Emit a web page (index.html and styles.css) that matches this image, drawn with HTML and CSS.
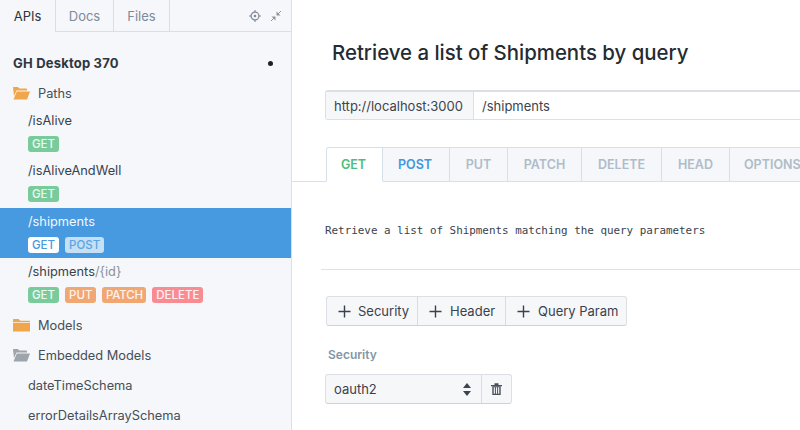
FILE: index.html
```html
<!DOCTYPE html>
<html lang="en">
<head>
<meta charset="utf-8">
<title>Stoplight</title>
<link rel="stylesheet" href="styles.css">
</head>
<body>
<div class="app">
  <aside class="sidebar">
    <div class="side-tabs">
      <div class="side-tab active">APIs</div>
      <div class="side-tab">Docs</div>
      <div class="side-tab">Files</div>
      <div class="side-tools">
        <svg class="tool" width="12" height="12" viewBox="0 0 12 12"><circle cx="6" cy="6" r="3.9" fill="none" stroke="#7f8a96" stroke-width="1.2"/><circle cx="6" cy="6" r="1.3" fill="#7f8a96"/><path d="M6 0v2M6 10v2M0 6h2M10 6h2" stroke="#7f8a96" stroke-width="1.1"/></svg>
        <svg class="tool" width="12" height="12" viewBox="0 0 12 12"><path d="M1 11l3-3M11 1L8 4" stroke="#8c96a1" stroke-width="1"/><path d="M1.500 6.500h4v4zM10.500 5.500h-4v-4z" fill="#8c96a1"/></svg>
      </div>
    </div>
    <div class="tree">
      <div class="project"><span>GH Desktop 370</span><i class="dot"></i></div>
      <div class="folder">
        <svg class="ficon" width="17" height="14" viewBox="0 0 17 14"><path d="M0 1.500Q0 1 .5 1h4.300l1.700 1.600h6.700q.8 0 .8.800V4.500H3.500L1 10z" fill="#f0a64b"/><path d="M3.800 5.500H17L14 13.500H.5z" fill="#f0a64b"/></svg>
        <span>Paths</span>
      </div>
      <div class="path">
        <div class="path-name">/isAlive</div>
        <div class="badges"><span class="badge get">GET</span></div>
      </div>
      <div class="path">
        <div class="path-name">/isAliveAndWell</div>
        <div class="badges"><span class="badge get">GET</span></div>
      </div>
      <div class="path selected">
        <div class="path-name">/shipments</div>
        <div class="badges"><span class="badge sel-get">GET</span><span class="badge sel-post">POST</span></div>
      </div>
      <div class="path">
        <div class="path-name">/shipments<span class="param">/{id}</span></div>
        <div class="badges"><span class="badge get">GET</span><span class="badge put">PUT</span><span class="badge put patch">PATCH</span><span class="badge del">DELETE</span></div>
      </div>
      <div class="folder models">
        <svg class="ficon" width="17" height="14" viewBox="0 0 17 14"><path d="M0 1.500Q0 1 .5 1h5l1.800 1.800H16.500q.5 0 .5.500v1H0z" fill="#f0a64b"/><path d="M0 5h17v8.500H0z" fill="#f0a64b"/></svg>
        <span>Models</span>
      </div>
      <div class="folder">
        <svg class="ficon" width="17" height="14" viewBox="0 0 17 14"><path d="M0 1.500Q0 1 .5 1h4.300l1.700 1.600h6.700q.8 0 .8.800V4.500H3.500L1 10z" fill="#9ea4ab"/><path d="M3.800 5.500H17L14 13.500H.5z" fill="#9ea4ab"/></svg>
        <span>Embedded Models</span>
      </div>
      <div class="schema">dateTimeSchema</div>
      <div class="schema">errorDetailsArraySchema</div>
    </div>
  </aside>
  <main class="main">
    <h1 class="title">Retrieve a list of Shipments by query</h1>
    <div class="url">
      <div class="url-host">http://localhost:3000</div>
      <div class="url-path">/shipments</div>
    </div>
    <div class="methods">
      <div class="lead"></div>
      <div class="method m-get">GET</div>
      <div class="method m-post">POST</div>
      <div class="method">PUT</div>
      <div class="method">PATCH</div>
      <div class="method">DELETE</div>
      <div class="method">HEAD</div>
      <div class="method last">OPTIONS</div>
    </div>
    <p class="desc">Retrieve a list of Shipments matching the query parameters</p>
    <div class="rule"></div>
    <div class="btn-group">
      <div class="btn b-sec"><svg width="13" height="13" viewBox="0 0 13 13"><path d="M6.500.5v12M.5 6.500h12" stroke="#39424c" stroke-width="1.400"/></svg><span>Security</span></div>
      <div class="btn b-head"><svg width="13" height="13" viewBox="0 0 13 13"><path d="M6.500.5v12M.5 6.500h12" stroke="#39424c" stroke-width="1.400"/></svg><span>Header</span></div>
      <div class="btn b-query"><svg width="13" height="13" viewBox="0 0 13 13"><path d="M6.500.5v12M.5 6.500h12" stroke="#39424c" stroke-width="1.400"/></svg><span>Query Param</span></div>
    </div>
    <div class="label">Security</div>
    <div class="select-row">
      <div class="select"><span>oauth2</span><svg width="8" height="13" viewBox="0 0 8 13"><path d="M4 0l4 5H0zM4 13L0 8h8z" fill="#3d4650"/></svg></div>
      <div class="trash"><svg width="11" height="12" viewBox="0 0 11 12"><path d="M0 2h11v1.200H0zM3.500.3h4V2h-4z" fill="#49525c"/><path d="M1.300 3.200h8.400V12H1.300zM2.700 4.300v6.500h1.200V4.300zM4.900 4.300v6.500h1.200V4.300zM7.100 4.300v6.500h1.200V4.300z" fill="#49525c" fill-rule="evenodd"/></svg></div>
    </div>
  </main>
</div>
</body>
</html>
```
FILE: styles.css
```css
* { box-sizing: border-box; }
html, body { margin: 0; padding: 0; }
body {
  width: 800px;
  height: 430px;
  overflow: hidden;
  background: #fff;
  font-family: Inter, "Liberation Sans", sans-serif;
  font-size: 12.800px;
  color: #39424c;
}
.app { display: flex; height: 430px; }

.sidebar {
  width: 292px;
  flex: none;
  background: #f5f7fa;
  border-right: 1px solid #d8e0e8;
  overflow: hidden;
}
.side-tabs {
  display: flex;
  height: 32px;
  border-bottom: 1px solid #d5e0e9;
}
.side-tab {
  display: flex;
  align-items: center;
  justify-content: center;
  width: 58px;
  font-size: 13px;
  color: #7c8b9a;
  border-right: 1px solid #d5e0e9;
}
.side-tab.active {
  width: 56px;
  height: 32px;
  flex: none;
  padding-bottom: 1px;
  color: #2c333b;
  background: #f5f7fa;
}
.side-tab:nth-child(3) { width: 56px; }
.side-tools {
  display: flex;
  align-items: center;
  gap: 9px;
  margin-left: auto;
  padding-right: 9px;
}
.tool { display: block; }

.project {
  display: flex;
  align-items: center;
  justify-content: space-between;
  height: 30px;
  margin-top: 16px;
  padding: 0 18px 0 13px;
  font-weight: 700;
  font-size: 13px;
  letter-spacing: .2px;
  color: #2f363e;
}
.dot { width: 5px; height: 5px; border-radius: 50%; background: #1b2026; }
.folder {
  display: flex;
  align-items: center;
  gap: 8px;
  height: 30px;
  padding-left: 13px;
  color: #464e57;
}
.folder.models { margin-top: 2px; }
.ficon { display: block; flex: none; }
.path {
  height: 50px;
  padding: 4px 0 0 28px;
}
.selected, .selected + .path { padding-top: 5px; }
.path-name { height: 18px; line-height: 18px; color: #39424c; }
.param { color: #8a9097; }
.badges { display: flex; gap: 6px; margin-top: 6px; }
.badge {
  display: block;
  height: 16px;
  padding: 0 4px;
  border-radius: 3px;
  line-height: 16px;
  font-size: 11.500px;
  font-weight: 500;
  color: #eafaf1;
}
.get { background: #7acb9b; }
.put { background: #f0a772; color: #fdf3ea; }
.patch { letter-spacing: -.2px; padding: 0 3.500px; }
.del { background: #f98c92; color: #fff0f1; }
.selected { background: #4799e0; }
.selected .path-name { color: #f2f8fd; }
.sel-get { background: #fff; color: #4799e0; }
.sel-post { background: #c5dff5; color: #5aa4e3; }
.schema { height: 30px; line-height: 31px; padding-left: 28px; color: #464e57; }

.main { flex: 1; min-width: 0; overflow: hidden; }
.title {
  margin: 40px 0 0 40px;
  font-size: 20.400px;
  line-height: 26px;
  font-weight: 500;
  color: #252b32;
  white-space: nowrap;
}
.url {
  display: flex;
  height: 30px;
  margin: 24px 0 0 33px;
  border: 1px solid #dcdfe3;
  border-top-width: 2px;
  border-right: 0;
  border-radius: 3px 0 0 3px;
  line-height: 28px;
  font-size: 13px;
}
.url-host {
  width: 148px;
  flex: none;
  padding-left: 8px;
  background: #f6f7f9;
  border-right: 1px solid #dcdfe3;
  color: #3c444d;
}
.url-path { padding-left: 8px; color: #3c444d; }

.methods {
  display: flex;
  height: 35px;
  margin-top: 27px;
  font-size: 12.500px;
  font-weight: 600;
  white-space: nowrap;
}
.lead { width: 34px; flex: none; border-bottom: 1px solid #d5e0e9; }
.method {
  display: flex;
  align-items: center;
  justify-content: center;
  flex: none;
  color: #b0bcc8;
  background: #f5f7fa;
  border: 1px solid #d5e0e9;
  border-left: 0;
  padding: 0 14px;
}
.method:nth-child(4) { width: 58px; }
.method:nth-child(5) { width: 74px; }
.method:nth-child(6) { width: 80px; }
.method:nth-child(7) { width: 68px; }
.method.last { border-right: 0; width: 100px; justify-content: flex-start; }
.m-get {
  width: 57px;
  padding: 0 15px 0 13px;
  color: #4cbd7d;
  background: #fff;
  border-left: 1px solid #d5e0e9;
  border-bottom-color: #fff;
  border-radius: 3px 0 0 0;
}
.m-post { width: 67px; padding: 0 15px 0 13px; color: #4396e0; }
.desc {
  margin: 42px 0 0 33px;
  font-family: "DejaVu Sans Mono", "Liberation Mono", monospace;
  font-size: 10.900px;
  line-height: 14px;
  color: #39424c;
  white-space: nowrap;
}
.rule { height: 1px; margin: 31px 0 0 29px; background: #dfe3e7; }

.btn-group {
  display: inline-flex;
  height: 30px;
  margin: 26px 0 0 34px;
  border: 1px solid #dcdfe3;
  border-bottom-color: #cfd3d8;
  border-radius: 3px;
  background: #f6f7f9;
  font-size: 13px;
}
.btn {
  display: flex;
  align-items: center;
  gap: 8px;
  padding-left: 11px;
  color: #39424c;
  border-left: 1px solid #d8dbdf;
}
.b-sec { width: 90px; gap: 7px; border-left: 0; }
.b-head { width: 88px; }
.b-query { width: 121px; }
.label {
  margin: 20px 0 0 36px;
  font-size: 12px;
  line-height: 18px;
  font-weight: 600;
  color: #8496a6;
}
.select-row {
  display: flex;
  width: 187px;
  height: 30px;
  margin: 10px 0 0 33px;
  border: 1px solid #dcdfe3;
  border-bottom-color: #cfd3d8;
  border-radius: 3px;
  background: #f6f7f9;
  font-size: 13px;
}
.select {
  display: flex;
  align-items: center;
  justify-content: space-between;
  flex: 1;
  padding: 0 10px 0 8px;
  border-right: 1px solid #d8dbdf;
  color: #39424c;
}
.trash { display: flex; align-items: center; justify-content: center; width: 29px; flex: none; }
```
